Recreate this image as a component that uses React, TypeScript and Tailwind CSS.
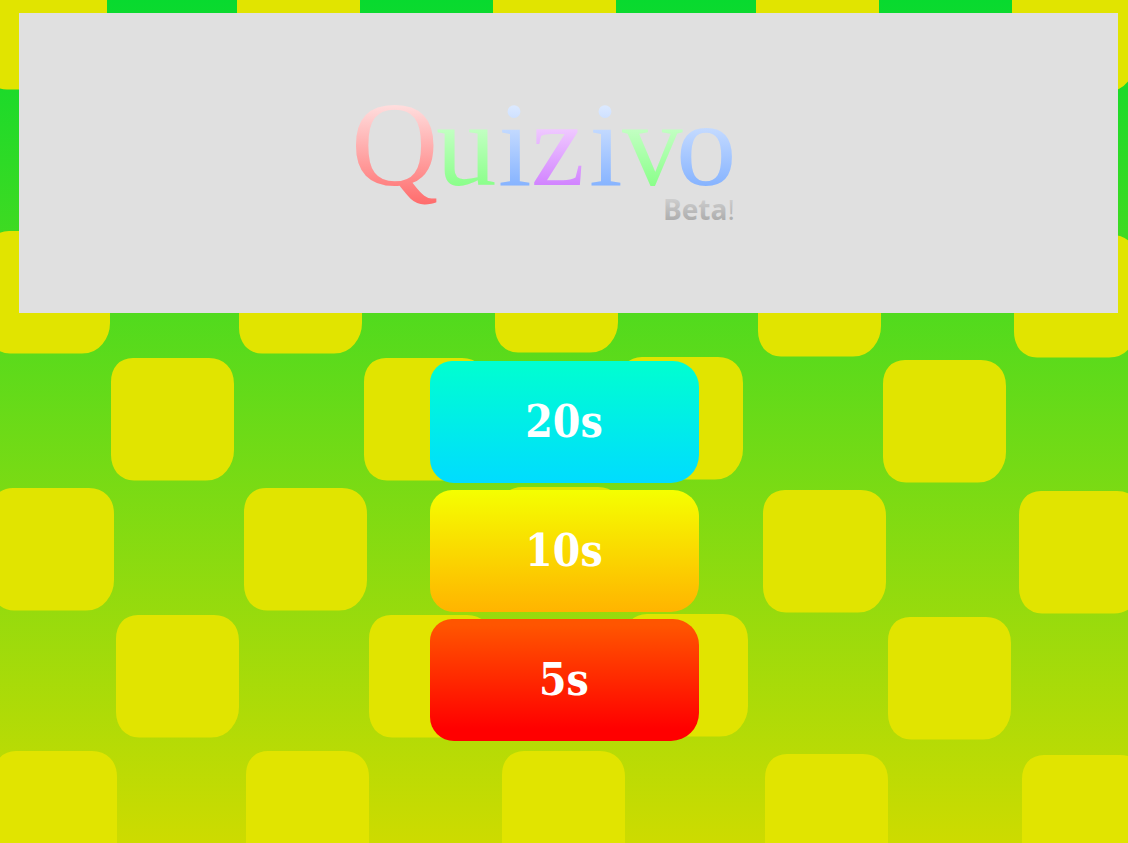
const tiles: [number, number][] = [
  [-16, -33], [237, -33], [493, -33], [756, -32], [1012, -31],
  [-13, 231], [239, 231], [495, 230], [758, 234], [1014, 235],
  [111, 358], [364, 358], [620, 357], [883, 360],
  [-9, 488], [244, 488], [500, 487], [763, 490], [1019, 491],
  [116, 615], [369, 615], [625, 614], [888, 617],
  [-6, 751], [246, 751], [502, 751], [765, 754], [1022, 755],
];

const tilePath =
  "M22 0H98Q109 0 116 7Q123 14 123 26V92Q123 104 115.500 113Q108 122.500 95 122.500H23Q13 122.500 6 115Q0 107 0 97V24Q0 13 6 6.500Q12 0 22 0Z";

const letters = [
  { char: "Q", x: 351, fill: "url(#red)" },
  { char: "u", x: 436, fill: "url(#green)" },
  { char: "i", x: 498, fill: "url(#blue)" },
  { char: "z", x: 531, fill: "url(#violet)" },
  { char: "i", x: 589, fill: "url(#blue)" },
  { char: "v", x: 622, fill: "url(#green)" },
  { char: "o", x: 676, fill: "url(#blue)" },
];

const options = [
  { label: "20s", color: "from-[#00ffd0] to-[#00dcff]" },
  { label: "10s", color: "from-[#f5ff00] to-[#ffb400]" },
  { label: "5s", color: "from-[#ff5500] from-5% to-[#ff0000] to-90%" },
];

function Gradient({ id, top, bottom, y1, y2 }: { id: string; top: string; bottom: string; y1: number; y2: number }) {
  return (
    <linearGradient id={id} gradientUnits="userSpaceOnUse" x1="0" x2="0" y1={y1} y2={y2}>
      <stop offset="0" stopColor={top} />
      <stop offset="1" stopColor={bottom} />
    </linearGradient>
  );
}

function Backdrop() {
  return (
    <svg
      className="absolute inset-0 -z-10 h-full w-full"
      viewBox="0 0 1128 843"
      preserveAspectRatio="xMidYMid slice"
      aria-hidden="true"
    >
      {tiles.map(([x, y]) => (
        <path key={`${x},${y}`} d={tilePath} transform={`translate(${x} ${y})`} fill="#e1e400" />
      ))}
    </svg>
  );
}

function Logo() {
  return (
    <svg className="w-[400px]" viewBox="345 63 400 200" role="img" aria-label="Quizivo Beta!">
      <defs>
        <Gradient id="red" top="#ffe0e0" bottom="#ff6868" y1={103} y2={208} />
        <Gradient id="green" top="#d0ffd0" bottom="#88ff88" y1={115} y2={188} />
        <Gradient id="blue" top="#e2edff" bottom="#84b2ff" y1={100} y2={188} />
        <Gradient id="violet" top="#f0caff" bottom="#d080ff" y1={128} y2={188} />
        <Gradient id="gray" top="#cfcfcf" bottom="#aaaaaa" y1={198} y2={222} />
      </defs>
      <g fontFamily="'Liberation Serif', serif" fontSize="121">
        {letters.map(({ char, x, fill }) => (
          <text key={x} x={x} y="185" fill={fill}>
            {char}
          </text>
        ))}
      </g>
      <text x="663" y="220" fill="url(#gray)" fontFamily="'Open Sans', sans-serif" fontSize="28" fontWeight="700">
        Beta<tspan fontWeight="400">!</tspan>
      </text>
    </svg>
  );
}

export default function App() {
  return (
    <div className="relative isolate min-h-screen overflow-hidden bg-linear-to-b/srgb from-[#08da2f] to-[#cddb00] pt-[13px]">
      <Backdrop />
      <header className="mr-[10px] ml-[19px] flex h-[300px] items-center justify-center bg-[#e0e0e0] pr-[48px]">
        <h1>
          <Logo />
        </h1>
      </header>
      <main className="flex flex-col items-center gap-[7px] pt-12 pb-12">
        {options.map(({ label, color }) => (
          <button
            key={label}
            type="button"
            className={`h-[122px] w-[269px] cursor-pointer rounded-tl-[22px] rounded-tr-[26px] rounded-br-[28px] rounded-bl-[24px] bg-linear-to-b/srgb font-['DejaVu_Serif_Condensed','DejaVu_Serif',serif] text-[44px] font-bold text-white ${color}`}
          >
            {label}
          </button>
        ))}
      </main>
    </div>
  );
}
